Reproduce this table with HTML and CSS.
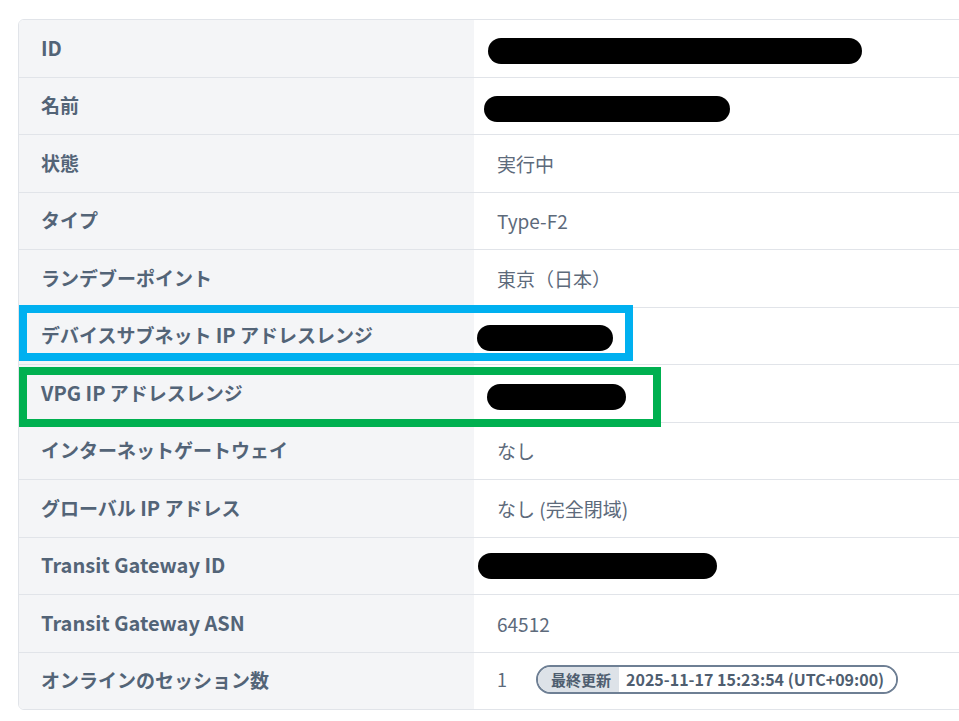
FILE: index.html
```html
<!DOCTYPE html>
<html lang="ja">
<head>
<meta charset="utf-8">
<title>詳細</title>
<link rel="stylesheet" href="styles.css">
</head>
<body>
<div class="page">
  <div class="table">
    <div class="row"><div class="label"><span class="lat">ID</span></div><div class="value"><span class="redact r-id"></span></div></div>
    <div class="row"><div class="label">名前</div><div class="value"><span class="redact r-name"></span></div></div>
    <div class="row"><div class="label">状態</div><div class="value">実行中</div></div>
    <div class="row"><div class="label">タイプ</div><div class="value">Type-F2</div></div>
    <div class="row"><div class="label">ランデブーポイント</div><div class="value">東京（日本）</div></div>
    <div class="row"><div class="label">デバイスサブネット&nbsp;<span class="lat">IP</span>&nbsp;アドレスレンジ</div><div class="value"><span class="redact r-subnet"></span></div></div>
    <div class="row"><div class="label"><span class="lat">VPG IP</span>&nbsp;アドレスレンジ</div><div class="value"><span class="redact r-vpg"></span></div></div>
    <div class="row"><div class="label">インターネットゲートウェイ</div><div class="value">なし</div></div>
    <div class="row"><div class="label">グローバル&nbsp;<span class="lat">IP</span>&nbsp;アドレス</div><div class="value">なし (完全閉域)</div></div>
    <div class="row"><div class="label"><span class="lat">Transit Gateway ID</span></div><div class="value"><span class="redact r-tgw"></span></div></div>
    <div class="row"><div class="label"><span class="lat">Transit Gateway ASN</span></div><div class="value">64512</div></div>
    <div class="row last"><div class="label">オンラインのセッション数</div><div class="value"><span class="count">1</span><span class="badge"><span class="badge-key">最終更新</span><span class="badge-val">2025-11-17 15:23:54 (UTC+09:00)</span></span></div></div>
  </div>
  <div class="mark mark-blue"></div>
  <div class="mark mark-green"></div>
</div>
</body>
</html>
```

FILE: styles.css
```css
html, body {
  margin: 0;
  padding: 0;
  background: #ffffff;
}
body {
  font-family: "Noto Sans CJK JP", "Noto Sans", sans-serif;
  width: 959px;
  height: 721px;
  overflow: hidden;
}
.page {
  position: relative;
  padding: 19px 0 0 18px;
}
.table {
  width: 980px;
  border: 1px solid #e1e4e9;
  border-radius: 6px;
  overflow: hidden;
  display: flex;
  flex-direction: column;
}
.row {
  display: grid;
  grid-template-columns: 455px 1fr;
  height: 57.5px;
  box-sizing: border-box;
  border-bottom: 1px solid #e1e4e9;
}
.row.last {
  border-bottom: none;
  height: 56.5px;
}
.label {
  background: #f4f5f7;
  display: flex;
  align-items: center;
  padding-left: 22px;
  padding-bottom: 2px;
  font-size: 19px;
  font-weight: 700;
  color: #536477;
  white-space: pre;
}
.lat {
  font-size: 20px;
}
.value {
  background: #ffffff;
  display: flex;
  align-items: center;
  padding-left: 23px;
  font-size: 19px;
  color: #5d6a7b;
}
.last .label,
.last .value {
  padding-bottom: 3px;
}
.redact {
  display: inline-block;
  height: 26px;
  background: #000000;
  border-radius: 13px;
}
.r-id { width: 374px; margin-left: -9px; margin-top: 5px; }
.r-name { width: 246px; margin-left: -13px; margin-top: 6px; }
.r-subnet { width: 136px; margin-left: -20px; margin-top: 4px; }
.r-vpg { width: 139px; margin-left: -10px; margin-top: 7px; }
.r-tgw { width: 239px; margin-left: -19px; }
.count {
  font-size: 18px;
  width: 39px;
}
.badge {
  display: inline-flex;
  align-items: stretch;
  height: 29px;
  box-sizing: border-box;
  border: 2px solid #6e7f94;
  border-radius: 15px;
  overflow: hidden;
  font-weight: 700;
  color: #4f5e70;
}
.badge-key {
  display: flex;
  align-items: center;
  background: #dde2e8;
  padding: 0 8px 0 13px;
  font-size: 15px;
}
.badge-val {
  display: flex;
  align-items: center;
  background: #ffffff;
  padding: 0 12px 0 7px;
  font-size: 16px;
}
.mark {
  position: absolute;
  box-sizing: border-box;
  border: 8px solid;
  pointer-events: none;
}
.mark-blue {
  left: 19px;
  top: 305px;
  width: 614px;
  height: 56px;
  border-color: #00b0f0;
}
.mark-green {
  left: 19px;
  top: 367px;
  width: 642px;
  height: 60px;
  border-color: #00b050;
}
```
